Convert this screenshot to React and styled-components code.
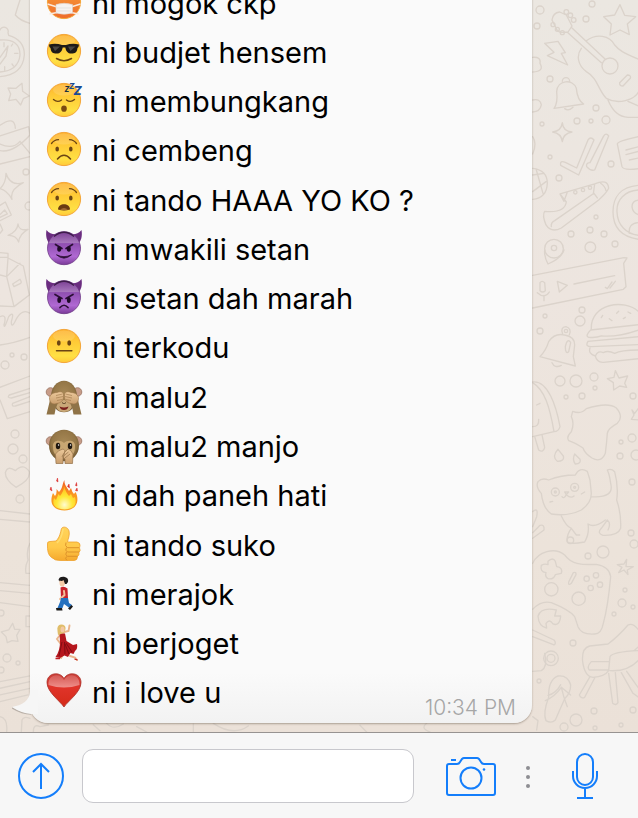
import React from "react";
import styled, { createGlobalStyle } from "styled-components";

const GlobalStyle = createGlobalStyle`
  * {
    box-sizing: border-box;
  }
  body {
    margin: 0;
    font-family: Inter, "Liberation Sans", sans-serif;
    color: #000;
    background: #f7f7f7;
  }
`;

const Page = styled.div`
  display: flex;
  flex-direction: column;
  height: 100vh;
`;

const Chat = styled.main`
  position: relative;
  flex: 1;
  min-height: 0;
  display: flex;
  flex-direction: column;
  justify-content: flex-end;
  padding: 0 106px 9px 30px;
  overflow: hidden;
  background: linear-gradient(#ebe7e1, #ede5df 40%, #ece3da 75%, #ebe1d8);
`;

const Wallpaper = styled.svg`
  position: absolute;
  inset: 0;
  width: 100%;
  height: 100%;
  fill: none;
  stroke: #dbd3cb;
  stroke-width: 4;
  stroke-linecap: round;
  stroke-linejoin: round;
`;

const Bubble = styled.article`
  position: relative;
  flex: 1 0 auto;
  display: flex;
  flex-direction: column;
  margin-top: -21px;
  padding: 0 16px 5px;
  border-radius: 18px;
  background: linear-gradient(to top, #f2f2f2, #fafafa 50px);
  box-shadow: 0 1px 2px rgba(90, 75, 60, 0.45);
`;

const Tail = styled.svg`
  position: absolute;
  left: -18px;
  bottom: 7px;
  width: 26px;
  height: 26px;
`;

const List = styled.ul`
  flex: 1;
  display: flex;
  flex-direction: column;
  margin: 0;
  padding: 0;
  list-style: none;
`;

const Line = styled.li`
  flex: 1 0 49px;
  display: flex;
  align-items: center;
  gap: 10px;
  font-size: 29px;
  line-height: 36px;
  white-space: nowrap;
`;

const Emoji = styled.svg`
  flex: none;
  width: 36px;
  height: 40px;
  overflow: visible;
`;

const Time = styled.time`
  align-self: flex-end;
  margin-left: auto;
  font-size: 21px;
  font-weight: 300;
  line-height: 20px;
  color: #a6a6a6;
`;

const Bar = styled.form`
  display: flex;
  align-items: center;
  height: 86px;
  padding: 0 40px 0 18px;
  border-top: 1px solid #979391;
  background: #f7f7f7;
`;

const IconButton = styled.button`
  flex: none;
  display: flex;
  padding: 0;
  border: 0;
  background: none;
  color: #147efb;
  svg {
    fill: none;
    stroke: currentColor;
    stroke-width: 2;
  }
`;

const Field = styled.input`
  flex: 1;
  min-width: 0;
  height: 54px;
  margin: 0 32px 0 18px;
  padding: 0 14px;
  border: 1px solid #c8c8cd;
  border-radius: 11px;
  background: #fff;
  font: inherit;
  font-size: 29px;
`;

const Dots = styled.svg`
  flex: none;
  margin: 0 41px 0 29px;
  fill: #8e8e93;
`;

const Gradients = () => (
  <svg width="0" height="0" style={{ position: "absolute" }} aria-hidden="true">
    <defs>
      <linearGradient id="gold" x2="0" y2="1">
        <stop offset="0" stopColor="#fdb02c" />
        <stop offset="0.35" stopColor="#ffc936" />
        <stop offset="0.8" stopColor="#ffe044" />
        <stop offset="1" stopColor="#ffc938" />
      </linearGradient>
      <linearGradient id="hot" x2="0" y2="1">
        <stop offset="0" stopColor="#f9a13b" />
        <stop offset="1" stopColor="#ee6b2a" />
      </linearGradient>
      <linearGradient id="purple" x2="0" y2="1">
        <stop offset="0" stopColor="#7b3f94" />
        <stop offset="0.34" stopColor="#a878bd" />
        <stop offset="0.36" stopColor="#8f4fb0" />
        <stop offset="0.75" stopColor="#b069d3" />
        <stop offset="1" stopColor="#7a3a98" />
      </linearGradient>
      <radialGradient id="fur" cx="50%" cy="45%" r="55%">
        <stop offset="0" stopColor="#a98a58" />
        <stop offset="0.75" stopColor="#957747" />
        <stop offset="1" stopColor="#6f5732" />
      </radialGradient>
      <linearGradient id="paw" x2="0" y2="1">
        <stop offset="0" stopColor="#ecc99b" />
        <stop offset="1" stopColor="#c99e6e" />
      </linearGradient>
      <linearGradient id="flame" x2="0" y2="1">
        <stop offset="0" stopColor="#ef5a24" />
        <stop offset="0.5" stopColor="#fb9a20" />
        <stop offset="1" stopColor="#f79a1e" />
      </linearGradient>
      <radialGradient id="glow" cx="50%" cy="80%" r="70%">
        <stop offset="0" stopColor="#fffbd0" />
        <stop offset="0.5" stopColor="#ffe838" />
        <stop offset="1" stopColor="#ffc21e" />
      </radialGradient>
      <linearGradient id="thumb" x2="0" y2="1">
        <stop offset="0" stopColor="#ffd35a" />
        <stop offset="0.6" stopColor="#ffc94a" />
        <stop offset="1" stopColor="#f5a92e" />
      </linearGradient>
      <linearGradient id="heart" x2="0" y2="1">
        <stop offset="0" stopColor="#c9403a" />
        <stop offset="0.4" stopColor="#e0342a" />
        <stop offset="1" stopColor="#d42a18" />
      </linearGradient>
      <linearGradient id="shine" x2="0" y2="1">
        <stop offset="0" stopColor="#fff" stopOpacity="0.15" />
        <stop offset="1" stopColor="#fff" stopOpacity="0.45" />
      </linearGradient>
    </defs>
  </svg>
);

const ink = "#6b4514";

const Face = ({ fill = "url(#gold)" }) => (
  <>
    <circle cx="18" cy="18" r="16.6" fill={fill} stroke="#f4a63a" strokeWidth="1" />
    <ellipse cx="18" cy="8" rx="11" ry="5.5" fill="#fff" opacity="0.14" />
  </>
);

const Devil = () => (
  <>
    <path d="M0.5 0C-.6 6 .8 11 4 14L12 4C8 5 3.500 4 .5 0ZM35.500 0C36.600 6 35.200 11 32 14L24 4C28 5 32.500 4 35.500 0Z" fill="#6b2d80" />
    <circle cx="18" cy="18.200" r="16.500" fill="url(#purple)" stroke="#6c3785" strokeWidth="0.8" />
    <path d="M8 6.500Q18-2 28 6.500" fill="none" stroke="#3d1c4a" strokeWidth="1.400" />
  </>
);

const Head = ({ r = 13 }) => (
  <>
    <circle cx="4.500" cy="14" r="4.300" fill="#c79c88" stroke="#9a7461" strokeWidth="0.8" />
    <circle cx="31.500" cy="14" r="4.300" fill="#c79c88" stroke="#9a7461" strokeWidth="0.8" />
    <ellipse cx="18" cy="18.500" rx={r} ry="15.800" fill="url(#fur)" />
  </>
);

const pictures = {
  mask: (
    <>
      <Face fill="url(#hot)" />
      <path d="M1.500 20L11 23M3.500 30L11 28.500M34.500 20L25 23M32.500 30L25 28.500" stroke="#fbe9dc" strokeWidth="1.500" />
      <path d="M10 20.500Q18 18 26.500 20.500V29Q18 31.500 10 29Z" fill="#f6f2f0" stroke="#ddd0c8" strokeWidth="0.6" />
      <path d="M11 24H25M11 27H25" stroke="#dcd8d8" strokeWidth="0.6" />
    </>
  ),
  cool: (
    <>
      <Face />
      <path d="M3 11.500Q10 10 16 12H20Q26 10 33 11.500L32.500 14L31.500 15C31 19.500 29 20.600 25.500 20.600C21.500 20.600 20 18 19.300 14.500H16.700C16 18 14.500 20.600 10.500 20.600C7 20.600 5 19.500 4.500 15L3.400 14Z" fill="#1d1a18" />
      <path d="M6.500 13.500H14L9 18ZM22 13.500H29.500L24.500 18Z" fill="#77736e" opacity="0.5" />
      <path d="M10.500 25.500Q18 30 25.500 25.500" fill="none" stroke={ink} strokeWidth="1.500" strokeLinecap="round" />
    </>
  ),
  sleep: (
    <>
      <Face />
      <path d="M7.500 17.500Q11.500 21 15.500 18M20.500 18Q24.500 21 28.500 17.500" fill="none" stroke={ink} strokeWidth="1.400" strokeLinecap="round" />
      <ellipse cx="18" cy="26.700" rx="2.800" ry="3.100" fill="#7a4a12" />
      <g fill="#184a94" fontWeight="800" fontStyle="italic">
        <text x="18.500" y="10" fontSize="7" fill="#19303f">Z</text>
        <text x="23" y="7" fontSize="8">Z</text>
        <text x="27.500" y="13" fontSize="12">Z</text>
      </g>
    </>
  ),
  worried: (
    <>
      <Face />
      <path d="M5.500 12.500Q8 9 12.500 8.700M30.500 12.500Q28 9 23.500 8.700" fill="none" stroke={ink} strokeWidth="1.300" strokeLinecap="round" />
      <ellipse cx="11.200" cy="18" rx="1.800" ry="2.600" fill={ink} />
      <ellipse cx="24.800" cy="18" rx="1.800" ry="2.600" fill={ink} />
      <path d="M11.500 28Q18 20.500 24.500 28" fill="none" stroke={ink} strokeWidth="1.600" strokeLinecap="round" />
    </>
  ),
  anguished: (
    <>
      <Face />
      <path d="M5.500 11.500Q8 8 12.500 7.700M30.500 11.500Q28 8 23.500 7.700" fill="none" stroke={ink} strokeWidth="1.300" strokeLinecap="round" />
      <ellipse cx="11.200" cy="17" rx="1.800" ry="2.600" fill={ink} />
      <ellipse cx="24.800" cy="17" rx="1.800" ry="2.600" fill={ink} />
      <path d="M12 28.500C12 21.500 24 21.500 24 28.500Q18 30.500 12 28.500Z" fill="#6a3b12" />
      <path d="M14 28.500Q18 25.500 22 28.500Q18 30 14 28.500Z" fill="#a06a35" />
    </>
  ),
  imp: (
    <>
      <Devil />
      <path d="M9.500 14.500L16 18.500M26.500 14.500L20 18.500" stroke="#2b0f35" strokeWidth="1.700" strokeLinecap="round" />
      <ellipse cx="13.200" cy="19" rx="2" ry="2.800" fill="#1f0b28" />
      <ellipse cx="22.800" cy="19" rx="2" ry="2.800" fill="#1f0b28" />
      <path d="M10.500 24.800Q18 28.500 25.500 24.800Q18 31.500 10.500 24.800Z" fill="#2b0f35" stroke="#2b0f35" strokeWidth="0.8" strokeLinejoin="round" />
    </>
  ),
  angry: (
    <>
      <Devil />
      <path d="M9 15.500L16 19.500M27 15.500L20 19.500" stroke="#2b0f35" strokeWidth="1.700" strokeLinecap="round" />
      <ellipse cx="13.200" cy="21" rx="1.900" ry="3" fill="#1f0b28" />
      <ellipse cx="22.800" cy="21" rx="1.900" ry="3" fill="#1f0b28" />
      <path d="M14 28.500Q18 24 22 28.500" fill="none" stroke="#2b0f35" strokeWidth="1.700" strokeLinecap="round" />
    </>
  ),
  neutral: (
    <>
      <Face />
      <ellipse cx="12.800" cy="15" rx="1.900" ry="2.700" fill={ink} />
      <ellipse cx="23.200" cy="15" rx="1.900" ry="2.700" fill={ink} />
      <path d="M10.500 22.800H25.800" stroke={ink} strokeWidth="1.500" strokeLinecap="round" />
    </>
  ),
  seeNoEvil: (
    <>
      <Head />
      <ellipse cx="18" cy="28" rx="8" ry="6" fill="#c9a878" />
      <path d="M13.500 28.500Q18 30.500 22.500 28.500Q21.500 32 18 32Q14.500 32 13.500 28.500Z" fill="#7a1f1c" />
      <path d="M16.500 24.500L17.500 26M19.500 24.500L18.500 26" stroke="#473018" />
      <path d="M4 22L.5 36.500H8.500Q9 30 12 25ZM32 22L35.500 36.500H27.500Q27 30 24 25Z" fill="#8f7347" />
      <path d="M4 23C2 18 6 14.500 11 14.500C15 13 17.500 14 17.500 17C18 22 15 25 11 25.500C8 26.500 5 26 4 23ZM32 23C34 18 30 14.500 25 14.500C21 13 18.500 14 18.500 17C18 22 21 25 25 25.500C28 26.500 31 26 32 23Z" fill="url(#paw)" stroke="#9c7648" strokeWidth="0.6" />
      <path d="M10 17.500L16.500 16M10 20L17 18.500M11 22.500L16 21.500M26 17.500L19.500 16M26 20L19 18.500M25 22.500L20 21.500" stroke="#9c7648" strokeWidth="0.6" />
    </>
  ),
  speakNoEvil: (
    <>
      <Head r={15} />
      <path d="M7 20C6 13 14 12 18 16C22 12 30 13 29 20C29 27 25 31 18 31C11 31 7 27 7 20Z" fill="#c8a672" />
      <ellipse cx="12" cy="19" rx="2.200" ry="3.200" fill="#1f1710" />
      <ellipse cx="24" cy="19" rx="2.200" ry="3.200" fill="#1f1710" />
      <circle cx="12.600" cy="18" r="0.7" fill="#fff" />
      <circle cx="24.600" cy="18" r="0.7" fill="#fff" />
      <path d="M10 36.500L9.500 27Q12 23 17 22Q20 23 18.500 25.500L17 32V36.500ZM26.500 36.500L27 27Q25 22.500 22 22Q18 25 16 29.500L19 32V36.500Z" fill="url(#paw)" stroke="#937047" strokeWidth="0.7" />
      <path d="M17.500 29L22.500 25M19 31L24 27" stroke="#937047" strokeWidth="0.7" />
    </>
  ),
  fire: (
    <>
      <path d="M18.500 4C18 9 21 11 23 15L25 12Q26 16 28 18L29.500 16C33 22 33 34 18.500 34.500C4 34 4 24 7 17L9 20Q11 18 10.500 13L13 16C17 12 16 8 18.500 4Z" fill="url(#flame)" />
      <path d="M18 10Q20 17 23 20L25 18L27 22L29 21C31 28 29 33 18.500 33.500C8 33 6 28 8 22L10 24L12.500 18L14 20Q18 15 18 10Z" fill="url(#glow)" />
      <path d="M11.500 2L10.500 5L12 6ZM5 11L4 13.500L6 15ZM23 8L21.500 10.500L23.500 12ZM30.500 6.500L29.500 9.500L31 10ZM31 12L29.500 14.500L31.500 15Z" fill="#db2c2b" stroke="#db2c2b" strokeWidth="0.5" />
    </>
  ),
  thumb: (
    <>
      <path d="M1.500 18Q1 15.500 4 15.500L10 15C14 11 14.500 6 15.500 2.500C17 0 22 1 23 5C24 9 22 13 21.500 16H31Q34.500 17 34 19.500L33.500 22Q35 24.500 33 26.500Q33.500 29 31.500 30.500Q31.500 34.500 28 34.500H15Q9 35 5 31Q1 28 1.500 18Z" fill="url(#thumb)" stroke="#eea12c" strokeWidth="0.8" />
      <path d="M33 21.700H21.500Q18.500 20 20 16.500M33 26H21.500Q18.500 24.500 20.500 21.700M31.500 30.300H21.500Q18.500 29 20.500 26M20.500 30.500Q18.500 33 21 34.300" fill="none" stroke="#dd922a" strokeWidth="1" />
      <path d="M17 3Q16 12 11 17" fill="none" stroke="#ffe27c" strokeWidth="1.600" opacity="0.7" />
    </>
  ),
  walker: (
    <>
      <path d="M12.500 5Q13 1.300 18 1.700Q23 2.500 22 7L20.500 9H16Z" fill="#1d1a1a" />
      <path d="M13.500 5.500Q16 6.500 17.500 5L19 9Q18 12 15.500 11.500Q13 11 13.500 5.500Z" fill="#f5cba8" />
      <path d="M14.500 12.500Q18 10.500 21.500 13.500L22 23.500H15Z" fill="#c8232b" />
      <path d="M18 16L18.500 20L14 24" fill="none" stroke="#f2c09a" strokeWidth="2" strokeLinecap="round" />
      <path d="M15 23H22L23 28L26 30L23.500 33L18 29L16.500 33H11.500L14 27Z" fill="#2470bf" />
      <path d="M10 33H16L16.500 35.500H10.500ZM25.500 30L27 31.500L24 35L22 33.500Z" fill="#191919" />
    </>
  ),
  dancer: (
    <>
      <path d="M18 8L22.500 7L23.500 1.500M14 11L11 15L14 19" fill="none" stroke="#eab58c" strokeWidth="1.900" strokeLinecap="round" />
      <path d="M24 32L29 33.500L31 36M18 29L15 34" fill="none" stroke="#eab58c" strokeWidth="2" strokeLinecap="round" />
      <path d="M13.500 9L19 9.500L20.500 17L27 21L31 20Q32 25 29 27L27.500 30L24.500 29L22 33L18.500 31.500L14 34L9.500 33Q14 27 14 18Z" fill="#b5161d" />
      <path d="M16 18L13 32M18.500 18L19 30M20 19L26 28M19 20L23 30" stroke="#74090f" strokeWidth="0.8" />
      <path d="M11.500 7Q10.500 1 15 .5Q20 .5 19.500 5L18 9L12 11Z" fill="#e0bd69" />
      <ellipse cx="16.500" cy="5.500" rx="2" ry="2.900" fill="#f4c9a5" />
      <path d="M9.500 34.500H14M28.500 35L31.500 36" stroke="#bf1b22" strokeWidth="1.300" />
    </>
  ),
  heart: (
    <>
      <path d="M18 34C14 28 1 19 1 9.500C1 -.5 14 -2 18 5.500C22-2 35-.5 35 9.500C35 19 22 28 18 34Z" fill="url(#heart)" stroke="#a93028" strokeWidth="0.8" />
      <path d="M2.500 12C1.500 1 14-1 18 7C22-1 34.500 1 33.500 12Q18 17 2.500 12Z" fill="url(#shine)" />
    </>
  ),
};

const lines = [
  ["mask", "ni mogok ckp"],
  ["cool", "ni budjet hensem"],
  ["sleep", "ni membungkang"],
  ["worried", "ni cembeng"],
  ["anguished", "ni tando HAAA YO KO ?"],
  ["imp", "ni mwakili setan"],
  ["angry", "ni setan dah marah"],
  ["neutral", "ni terkodu"],
  ["seeNoEvil", "ni malu2"],
  ["speakNoEvil", "ni malu2 manjo"],
  ["fire", "ni dah paneh hati"],
  ["thumb", "ni tando suko"],
  ["walker", "ni merajok"],
  ["dancer", "ni berjoget"],
  ["heart", "ni i love u"],
];

// x, y, radius of the small rings scattered over both strips
const rings = [
  [540, 10, 4], [592, 4, 3], [586, 19, 3], [537, 26, 3], [550, 79, 3],
  [596, 108, 3], [606, 120, 4], [577, 121, 3], [591, 121, 2], [542, 124, 2],
  [550, 157, 2], [611, 164, 3], [559, 178, 3], [596, 217, 2], [571, 234, 3],
  [590, 230, 3], [604, 234, 3], [615, 244, 3], [545, 316, 2], [582, 310, 3],
  [580, 321, 5], [540, 331, 3], [560, 381, 5], [576, 381, 6], [594, 377, 4],
  [595, 388, 2], [566, 397, 2], [582, 396, 3], [633, 396, 3], [632, 438, 4],
  [621, 442, 2], [620, 456, 3], [636, 455, 5], [632, 482, 3], [631, 533, 3],
  [634, 544, 4], [603, 552, 6], [588, 556, 3], [625, 590, 2], [622, 603, 4],
  [614, 614, 2], [633, 607, 2], [573, 643, 3], [539, 681, 2], [594, 711, 3],
  [633, 710, 3], [576, 720, 6], [564, 727, 4], [621, 725, 2], [595, 728, 2],
  [26, 172, 3], [29, 206, 4], [12, 355, 2], [24, 357, 3], [5, 365, 4],
  [15, 434, 4], [13, 449, 5], [23, 459, 4], [20, 499, 4], [7, 658, 4],
  [18, 663, 2], [1, 613, 3], [1, 670, 3],
];

const Doodles = () => (
  <Wallpaper viewBox="0 0 638 732" preserveAspectRatio="xMidYMid slice" aria-hidden="true">
    <g strokeWidth="1.300">
      {rings.map(([x, y, r]) => (
        <circle key={`${x}-${y}`} cx={x} cy={y} r={r} />
      ))}
    </g>
    {/* guitar, star, bell, ticks, shoe */}
    <g transform="translate(518 0) scale(.3333)">
      <path d="M102 60Q105 38 125 36L145 45L162 78L150 96Q128 100 118 92ZM162 84L262 178M148 97L250 188M190 145C175 165 178 195 205 215C240 235 240 270 265 295C300 315 350 300 362 275M205 122C235 100 275 105 290 135C315 165 340 165 362 178M270 300Q290 350 330 352H362M305 248L328 225Q340 225 337 235L315 258Q304 258 305 248ZM330 304L362 318" />
      <circle cx="276" cy="198" r="24" />
      <g>
        <circle cx="105" cy="74" r="6" /><circle cx="118" cy="88" r="6" /><circle cx="133" cy="98" r="6" />
        <circle cx="145" cy="36" r="7" /><circle cx="157" cy="46" r="7" /><circle cx="167" cy="60" r="7" />
      </g>
      <path d="M306 14L320 46L353 50L328 72L334 104L306 90L276 105L280 72L257 50L290 45ZM80 130L120 124L142 158L130 160L149 195L88 167L108 157ZM108 325Q120 310 116 275C118 240 165 235 175 265Q178 300 197 312ZM140 326Q152 335 165 322M133 244A11 11 0 1 1 155 244" />
      <path d="M133 368Q135 394 162 396Q136 400 133 425Q130 400 104 396Q130 393 133 368ZM128 496Q125 480 142 487L176 504L210 420Q218 408 228 420L182 525ZM206 500Q204 488 216 488L256 410Q264 396 272 408L230 510Q218 514 206 500ZM298 432Q298 424 362 410M298 432L312 500Q316 512 362 506M324 450L362 440M324 464L362 454M334 480L362 474" />
      <path d="M126 582L230 552Q270 535 272 565Q265 580 242 600L130 684Q100 700 84 675Q72 645 80 634Q140 640 145 606ZM100 680Q98 668 110 662L228 580L238 594M230 552L226 582M126 582L138 604L148 576M248 550Q262 560 264 572" />
      <circle cx="172" cy="577" r="5" /><circle cx="195" cy="570" r="5" /><circle cx="216" cy="563" r="5" />
      <path d="M362 556C310 560 285 590 285 635C285 680 310 710 362 718M362 570C320 572 295 600 297 635C298 675 325 702 362 706M362 600Q342 602 342 620Q344 640 362 644M334 700Q330 670 362 668" />
      <path d="M44 505Q88 510 88 550Q86 595 44 598M44 525L78 520M44 575L84 545M55 510L75 580M44 172Q70 170 66 190Q80 215 44 216M44 300Q66 294 70 315Q66 336 44 336M44 410Q58 430 44 462" />
      <circle cx="108" cy="746" r="28" /><circle cx="108" cy="744" r="8" /><circle cx="217" cy="742" r="16" />
    </g>
    {/* voice note, burger, bell, ice cream, splash */}
    <g transform="translate(518 250) scale(.3333)">
      <path d="M80 0Q78 20 90 42Q130 25 138 0M44 76L318 23L327 24L317 40L324 110L316 118L44 174M66 98Q72 90 80 98L82 122Q74 130 66 122ZM58 128Q80 148 94 126M78 136V152M118 94L148 106L124 126ZM168 102L290 77M262 112L268 116L282 96M276 114L292 94" />
      <path d="M220 238C216 160 320 145 362 185M218 240L362 224M218 240Q200 258 212 262Q235 264 250 258Q300 262 362 240M210 274L362 260M210 274Q200 290 220 290L362 284M216 294Q210 312 232 318Q240 300 256 308Q270 300 290 310Q310 300 362 300M232 318Q236 338 256 337L362 326M250 203L254 196M274 206L282 212M296 190L302 184M316 206L322 202M330 186L338 190" />
      <path d="M66 320Q85 300 92 275Q110 248 140 255Q170 260 170 285L166 320L172 348ZM102 338Q110 356 130 346M142 290Q148 262 158 278L152 305Q142 314 142 290ZM134 252Q126 232 144 230Q162 236 154 254" /><circle cx="144" cy="243" r="5" />
      <path d="M292 362L303 384L329 378L320 400L326 412L305 408L287 420L286 398L268 386L288 382ZM44 396C90 390 115 470 126 530Q122 545 108 545L44 560M44 398C80 420 95 470 108 545M50 560L62 600Q76 610 80 592L72 555M44 530Q64 530 62 508M56 465L66 460" />
      <path d="M164 484Q190 494 205 476Q270 455 295 474Q318 500 298 520Q270 535 268 550Q266 580 262 610Q250 640 222 624Q200 610 195 594Q170 578 152 572Q144 560 160 545Q170 520 160 500ZM120 598Q100 620 118 634Q140 634 136 618ZM170 612Q162 630 172 642Q190 642 186 628ZM342 480L350 490L362 474M342 480L348 495L340 508L362 510" />
    </g>
    {/* cat, gamepad, chair, sandal */}
    <g transform="translate(518 480) scale(.3333)">
      <path d="M70 40Q52 20 60 5Q72-8 92 0Q130-15 172-15Q185-40 208-26L216 0L220 40Q220 70 190 90Q150 110 100 102Q75 85 70 40ZM220 50Q290 55 278 10Q275-15 268-30M268-30Q280-35 290-25Q302 20 296 60Q310 100 308 145Q300 168 255 166Q236 160 250 145L268 120Q280 130 270 150M130 108Q145 140 160 145Q145 165 148 185Q154 194 200 186Q215 160 210 132Q230 145 262 120M160 145L175 165H185M145 44L140 36L152 36ZM145 44Q138 58 132 50M145 44Q158 56 168 48M96 66L104 64M190 42L200 36" />
      <circle cx="112" cy="36" r="12" /><circle cx="170" cy="22" r="12" /><circle cx="112" cy="36" r="3" /><circle cx="170" cy="22" r="3" /><circle cx="157" cy="181" r="10" />
      <path d="M44 250C60 215 110 200 140 225C160 255 195 255 235 253Q275 260 278 290Q270 380 256 430Q250 462 230 462Q190 465 180 440L170 410Q155 390 100 368Q70 360 44 388M90 244Q105 230 112 244L116 260Q135 262 130 280L112 284Q106 300 90 296Q80 290 84 278Q65 275 70 256Q80 250 90 254ZM166 278Q175 275 174 284L160 310Q150 318 152 306Z" />
      <circle cx="100" cy="328" r="20" /><circle cx="182" cy="356" r="20" /><circle cx="206" cy="296" r="8" /><circle cx="234" cy="286" r="8" /><circle cx="218" cy="324" r="8" /><circle cx="246" cy="314" r="8" />
      <path d="M326 238L324 260L346 260L328 270L330 284L318 270L302 278L312 262L298 254L318 252ZM44 95Q62 80 56 110L44 140M44 158L66 136Q80 132 78 150L44 175M60 408Q70 380 115 390L110 408H128Q125 440 105 432Q95 415 84 430L86 444Q62 440 60 408ZM44 450L108 480Q116 490 108 495L44 470M80 520Q90 560 70 572L44 574" />
      <circle cx="99" cy="535" r="22" /><circle cx="99" cy="535" r="12" />
      <path d="M194 545Q190 505 215 498L270 492Q300 470 330 435Q345 428 362 450M194 545Q200 590 225 592Q260 590 272 572L276 530Q285 515 362 512M272 545H220Q205 560 214 570H272M276 572Q330 575 362 540M216 590L184 645Q190 658 200 652L230 594M272 580L284 670Q294 678 300 668L292 578M310 578L345 640L362 652M326 574L362 625M362 500L348 512" />
      <path d="M92 652Q90 600 120 588Q150 585 158 615Q158 640 140 656L112 720Q100 732 84 722Q74 700 92 652ZM82 662Q110 650 130 622Q136 650 148 680M90 646Q115 640 128 614M130 622L158 645M44 710L60 722L56 750" />
    </g>
    {/* compass, stars, carton on the left */}
    <g transform="scale(.3333)">
      <path d="M60 0Q50 30 46 45Q60 62 90 70M0 90A11 11 0 1 1 24 98L26 106Q74 120 73 165Q68 225 0 230M0 120Q60 115 60 165Q55 212 0 216M0 172L24 138L18 168L0 192M12 128V140M44 160H54M14 200V210M38 132L34 138M40 198L36 192" />
      <path d="M66 250L68 274L88 288L70 296L62 315L48 298L26 302L32 282L24 264L48 265ZM0 376Q44 345 46 385M0 408L86 380L90 405Q40 460 0 452M0 432Q38 450 60 424L90 460M0 492L90 470" />
      <path d="M18 520Q30 560 70 548Q28 570 36 598Q20 570 0 566M0 566Q18 550 18 520M54 672Q56 694 84 688Q58 702 56 726Q48 705 24 706Q52 695 54 672ZM0 616L16 606L34 645L0 662M0 644L14 630L22 642L0 652M0 672L8 690L0 700" />
      <path d="M0 758L24 760V772H0M24 774L70 798L88 885L42 920L20 830L0 825M24 774L20 830L60 790M42 920L0 918M38 852L60 838Q66 846 62 850L42 860ZM0 950Q22 940 12 975Q12 990 26 950Q45 930 34 965Q34 990 50 955Q68 925 90 940M0 1035Q40 1030 90 1012" />
    </g>
    <g transform="translate(0 370) scale(.3333)">
      <path d="M0 52L90 18M0 90L22 146L90 125M28 75L90 55M28 75Q20 84 34 84L90 68M38 100L90 80M38 100Q34 110 46 108L90 94M48 352Q16 330 16 308Q22 285 46 302Q70 278 88 305Q92 330 48 352ZM0 422L90 432M0 448L90 456M90 520Q78 540 84 570Q74 590 78 610H90M0 638L90 646M0 662L90 670M0 698L90 710M90 738H78V770H90M38 760L44 778L60 778L50 796L54 814L36 812L22 818L18 800L4 786L26 780ZM0 935L90 918M0 955L90 935M0 975L90 955M0 995L84 975M0 1040Q24 1045 20 1085M64 1085L66 1050Q70 1038 90 1045" />
    </g>
    <g transform="translate(0 700) scale(.3333)">
      <path d="M100 96Q100 70 120 80L145 75M280 74L300 92M320 70Q340 92 370 72M410 80L440 96M580 72V96M640 70Q700 110 745 78M1080 76L1100 96M1280 70Q1260 85 1290 96" />
    </g>
  </Wallpaper>
);

export default function App() {
  return (
    <Page>
      <GlobalStyle />
      <Gradients />
      <Chat>
        <Doodles />
        <Bubble>
          <Tail viewBox="0 0 26 26" aria-hidden="true">
            <path d="M0 18Q10 24 19 24" fill="none" stroke="#b9b0a8" strokeWidth="1.500" />
            <path d="M18 2Q17 14 0 17Q9 23 19 24H26V0H18Z" fill="#f6f6f6" />
          </Tail>
          <List>
            {lines.map(([name, text], i) => (
              <Line key={name}>
                <Emoji viewBox="0 0 36 40" aria-hidden="true">{pictures[name]}</Emoji>
                <span>{text}</span>
                {i === lines.length - 1 && <Time dateTime="22:34">10:34 PM</Time>}
              </Line>
            ))}
          </List>
        </Bubble>
      </Chat>
      <Bar onSubmit={(e) => e.preventDefault()}>
        <IconButton type="button" aria-label="Attach">
          <svg width="46" height="46" viewBox="0 0 46 46">
            <circle cx="23" cy="23" r="22" />
            <path d="M23 36V11M15 19L23 11L31 19" />
          </svg>
        </IconButton>
        <Field type="text" aria-label="Message" />
        <IconButton type="button" aria-label="Camera">
          <svg width="50" height="40" viewBox="0 0 50 40">
            <path d="M3 8H11Q13 8 14 6L16 3Q17 2 18 2H31Q32 2 33 3L35 6Q36 8 38 8H47Q49 8 49 10V37Q49 39 47 39H3Q1 39 1 37V10Q1 8 3 8Z" />
            <path d="M5 4H10" />
            <circle cx="25" cy="22" r="10.500" />
            <circle cx="38" cy="13.500" r="1.300" fill="currentColor" stroke="none" />
          </svg>
        </IconButton>
        <Dots width="6" height="24" viewBox="0 0 6 24" aria-hidden="true">
          <circle cx="3" cy="4" r="2" />
          <circle cx="3" cy="13" r="2" />
          <circle cx="3" cy="22" r="2" />
        </Dots>
        <IconButton type="button" aria-label="Record voice message">
          <svg width="26" height="46" viewBox="0 0 26 46">
            <rect x="5" y="1" width="16" height="31" rx="8" />
            <path d="M1 18V23A12 12 0 0 0 25 23V18M13 35V45M5 45H21" />
          </svg>
        </IconButton>
      </Bar>
    </Page>
  );
}
